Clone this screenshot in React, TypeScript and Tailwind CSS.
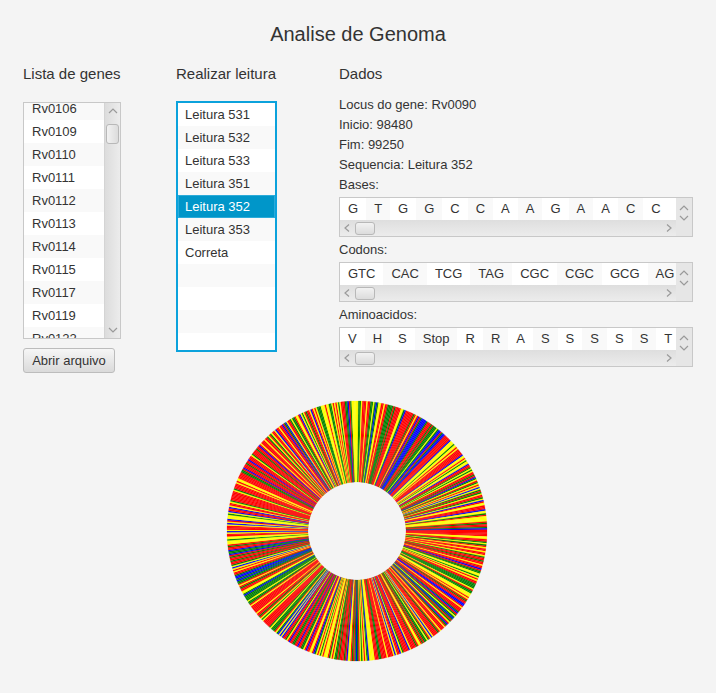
const GENES = ['Rv0106', 'Rv0109', 'Rv0110', 'Rv0111', 'Rv0112', 'Rv0113', 'Rv0114', 'Rv0115', 'Rv0117', 'Rv0119', 'Rv0122'];
const READS = ['Leitura 531', 'Leitura 532', 'Leitura 533', 'Leitura 351', 'Leitura 352', 'Leitura 353', 'Correta', '', '', '', ''];
const BASES = ['G', 'T', 'G', 'G', 'C', 'C', 'A', 'A', 'G', 'A', 'A', 'C', 'C'];
const CODONS = ['GTC', 'CAC', 'TCG', 'TAG', 'CGC', 'CGC', 'GCG', 'AG'];
const AMINOS = ['V', 'H', 'S', 'Stop', 'R', 'R', 'A', 'S', 'S', 'S', 'S', 'S', 'T'];

function Arrow({ d, className }: { d: string; className?: string }) {
  return (
    <svg width="12" height="8" viewBox="0 0 12 8" className={className} fill="none" stroke="#9a9a9a" strokeWidth="1.2">
      <path d={d} />
    </svg>
  );
}

const UP = 'M2 6 L6 2 L10 6';
const DOWN = 'M2 2 L6 6 L10 2';
const LEFT = 'M8 0.5 L4 4 L8 7.5';
const RIGHT = 'M4 0.5 L8 4 L4 7.5';

function HList({ items }: { items: string[] }) {
  return (
    <div className="flex h-10 w-[354px] border border-[#c8c8c8] bg-[#e6e6e6]">
      <div className="flex w-[336px] flex-col">
        <div className="flex h-[23px] overflow-hidden bg-white">
          {items.map((item, i) => (
            <div key={i} className={`flex shrink-0 items-center px-2 ${i % 2 ? 'bg-[#f9f9f9]' : 'bg-white'}`}>
              {item}
            </div>
          ))}
        </div>
        <div className="flex h-4 items-center bg-gradient-to-b from-[#dedede] to-[#ececec]">
          <Arrow d={LEFT} className="ml-px" />
          <div className="ml-0.5 h-[13px] w-5 rounded-[3px] border border-[#b8b8b8] bg-gradient-to-b from-[#f2f2f2] to-[#dcdcdc]" />
          <Arrow d={RIGHT} className="ml-auto mr-px" />
        </div>
      </div>
      <div className="flex w-4 flex-col items-center pt-1.5">
        <Arrow d={UP} />
        <Arrow d={DOWN} className="mt-0.5" />
      </div>
    </div>
  );
}

function Donut() {
  const COLORS = ['#ff0000', '#ffff00', '#008000', '#0000ff'];
  const n = 600;
  const cx = 131;
  const cy = 131;
  const outer = 130;
  const inner = 49;
  let seed = 98480;
  const next = () => {
    seed = (seed + 0x6d2b79f5) | 0;
    let t = Math.imul(seed ^ (seed >>> 15), 1 | seed);
    t = (t + Math.imul(t ^ (t >>> 7), 61 | t)) ^ t;
    return ((t ^ (t >>> 14)) >>> 0) / 4294967296;
  };
  const wedges = [];
  for (let i = 0; i < n; i++) {
    const r = next();
    const color = r < 0.42 ? COLORS[0] : r < 0.67 ? COLORS[1] : r < 0.88 ? COLORS[2] : COLORS[3];
    const a0 = (i / n) * Math.PI * 2;
    const a1 = ((i + 1) / n) * Math.PI * 2;
    const pts = [
      [cx + inner * Math.cos(a0), cy + inner * Math.sin(a0)],
      [cx + outer * Math.cos(a0), cy + outer * Math.sin(a0)],
      [cx + outer * Math.cos(a1), cy + outer * Math.sin(a1)],
      [cx + inner * Math.cos(a1), cy + inner * Math.sin(a1)],
    ];
    wedges.push(
      <polygon key={i} points={pts.map(p => p.map(v => v.toFixed(2)).join(',')).join(' ')} fill={color} stroke={color} strokeWidth="0.4" strokeOpacity="0.5" />
    );
  }
  return (
    <svg width="262" height="262" viewBox="0 0 262 262">
      {wedges}
    </svg>
  );
}

export default function App() {
  return (
    <div className="h-[693px] w-[716px] overflow-hidden bg-[#f4f4f4] font-['Liberation_Sans',sans-serif] text-[13px] text-[#333333]">
      <h1 className="pt-[22px] text-center text-xl leading-6">Analise de Genoma</h1>

      <div className="mt-[19px] flex pl-[23px]">
        <div className="w-[153px]">
          <h2 className="text-[15px] leading-[18px]">Lista de genes</h2>
          <div className="mt-[19px] flex h-[237px] w-[98px] overflow-hidden border border-[#c8c8c8] bg-white">
            <div className="-mt-[6px] w-[80px]">
              {GENES.map((g, i) => (
                <div key={g} className={`flex h-[23px] items-center pl-2 ${i % 2 ? 'bg-white' : 'bg-[#f9f9f9]'}`}>{g}</div>
              ))}
            </div>
            <div className="flex w-4 flex-col items-center border-l border-[#d4d4d4] bg-gradient-to-r from-[#dcdcdc] to-[#ececec] pt-1">
              <Arrow d={UP} />
              <div className="mt-[9px] h-5 w-[13px] rounded-[3px] border border-[#b8b8b8] bg-gradient-to-r from-[#f2f2f2] to-[#dcdcdc]" />
              <Arrow d={DOWN} className="mt-auto mb-1" />
            </div>
          </div>
          <button className="mt-[9px] h-[25px] w-[92px] rounded-[3px] border border-[#bcbcbc] bg-gradient-to-b from-[#f6f6f6] to-[#dadada] text-center">
            Abrir arquivo
          </button>
        </div>

        <div className="w-[163px]">
          <h2 className="text-[15px] leading-[18px]">Realizar leitura</h2>
          <div className="mt-[18px] h-[251px] w-[101px] overflow-hidden border-2 border-[#0ba2dc] bg-white">
            {READS.map((r, i) => (
              <div
                key={i}
                className={`flex h-[23px] items-center ${
                  i === 4 ? 'border border-[#2cabd9] bg-[#0096c9] pl-[6px] text-white' : i % 2 ? 'bg-[#f9f9f9] pl-[7px]' : 'bg-white pl-[7px]'
                }`}
              >
                {r}
              </div>
            ))}
          </div>
        </div>

        <div className="w-[354px]">
          <h2 className="text-[15px] leading-[18px]">Dados</h2>
          <div className="mt-[14px] flex flex-col gap-1 leading-4">
            <p>Locus do gene: Rv0090</p>
            <p>Inicio: 98480</p>
            <p>Fim: 99250</p>
            <p>Sequencia: Leitura 352</p>
            <p>Bases:</p>
          </div>
          <div className="mt-[4px]"><HList items={BASES} /></div>
          <p className="mt-[5px] leading-4">Codons:</p>
          <div className="mt-[4px]"><HList items={CODONS} /></div>
          <p className="mt-[5px] leading-4">Aminoacidos:</p>
          <div className="mt-[4px]"><HList items={AMINOS} /></div>
        </div>
      </div>

      <div className="ml-[226px] mt-[27px] w-[262px]">
        <Donut />
      </div>
    </div>
  );
}
